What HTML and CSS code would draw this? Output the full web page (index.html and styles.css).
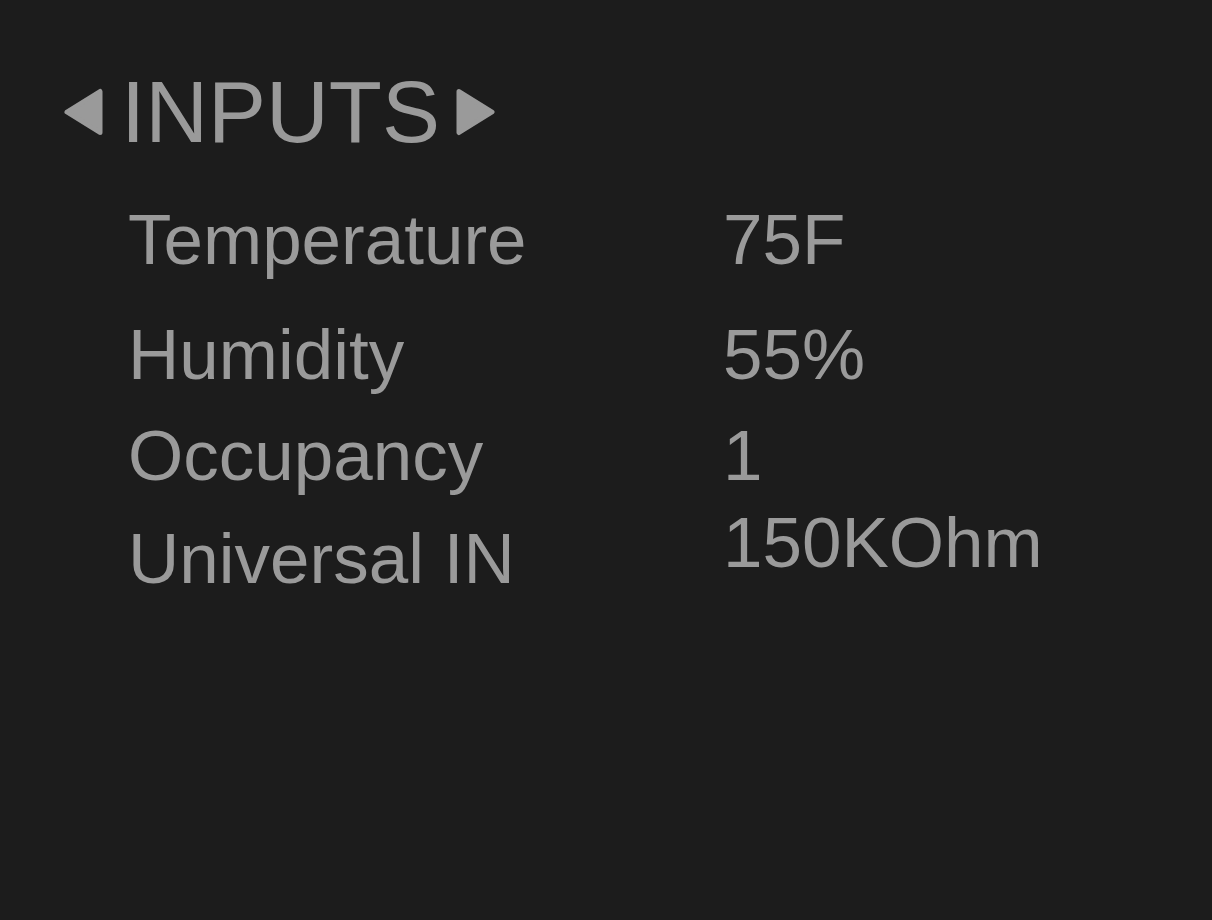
FILE: index.html
```html
<!DOCTYPE html>
<html>
<head>
<meta charset="utf-8">
<link rel="stylesheet" href="styles.css">
</head>
<body>
<div class="screen">
  <div class="title-row">
    <svg class="arrow arrow-left" width="40" height="48" viewBox="0 0 40 48"><polygon points="4,24 37,3.5 37,44.5" /></svg>
    <span class="title">INPUTS</span>
    <svg class="arrow arrow-right" width="40" height="48" viewBox="0 0 40 48"><polygon points="3,3.5 36,24 3,44.5" /></svg>
  </div>
  <div class="rows">
    <div class="row row-1"><span class="label">Temperature</span><span class="value">75F</span></div>
    <div class="row row-2"><span class="label">Humidity</span><span class="value">55%</span></div>
    <div class="row row-3"><span class="label">Occupancy</span><span class="value">1</span></div>
    <div class="row row-4"><span class="label label-low">Universal IN</span><span class="value">150KOhm</span></div>
  </div>
</div>
</body>
</html>
```
FILE: styles.css
```css
html, body {
  margin: 0;
  padding: 0;
  background: #1c1c1c;
}
body {
  width: 1212px;
  height: 920px;
  overflow: hidden;
  font-family: "Liberation Sans", Arial, Helvetica, sans-serif;
  color: #9a9a9a;
}
.screen {
  padding: 68px 0 0 63px;
}
.title-row {
  display: flex;
  align-items: center;
  height: 88px;
}
.title {
  font-size: 87px;
  line-height: 88px;
  margin-left: 18px;
  margin-right: 16px;
}
.arrow polygon {
  fill: #9a9a9a;
  stroke: #9a9a9a;
  stroke-width: 5;
  stroke-linejoin: round;
}
.rows {
  margin-left: 65px;
  margin-top: 48px;
  display: flex;
  flex-direction: column;
}
.row {
  display: grid;
  grid-template-columns: 595px auto;
  align-items: start;
  font-size: 71px;
  line-height: 72px;
}
.row-2 { margin-top: 43px; }
.row-3 { margin-top: 29px; }
.row-4 { margin-top: 15px; }
.label-low { padding-top: 16px; }
```
